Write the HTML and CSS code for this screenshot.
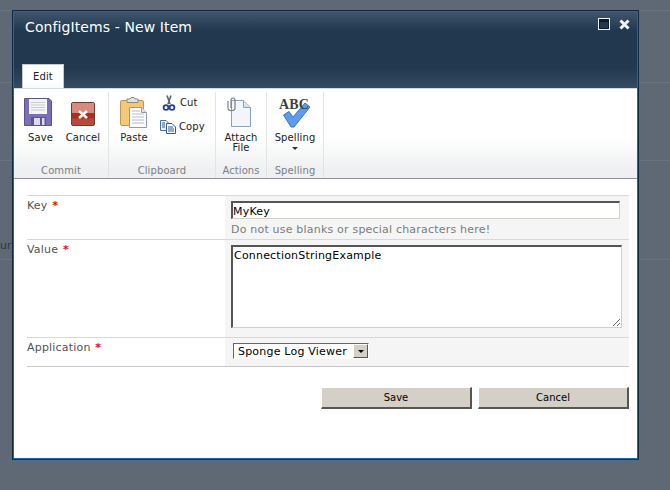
FILE: index.html
```html
<!DOCTYPE html>
<html lang="en">
<head>
<meta charset="utf-8">
<title>ConfigItems - New Item</title>
<link rel="stylesheet" href="styles.css">
</head>
<body>
<div class="backdrop">
  <i class="bg-line l1"></i><i class="bg-line l2"></i><i class="bg-line l3"></i><i class="bg-line l4"></i>
  <span class="bg-text">ur</span>
  <div class="dialog">
    <header class="titlebar">
      <div class="title-row">
        <h1 class="title">ConfigItems - New Item</h1>
        <div class="win-btns">
          <svg width="12" height="12" viewBox="0 0 12 12"><rect x="0.5" y="0.5" width="11" height="11" fill="#22384f" stroke="#eef0f2"/><rect x="1" y="1" width="10" height="2.5" fill="#0d1a28"/><rect x="1.5" y="3.5" width="9" height="7" fill="#22384f" stroke="#0d1a28"/></svg>
          <svg width="11" height="11" viewBox="0 0 11 11"><path d="M1.5 1.5 L9.5 9.5 M9.5 1.5 L1.5 9.5" stroke="#f4f5f6" stroke-width="3" fill="none"/></svg>
        </div>
      </div>
      <div class="tab">Edit</div>
    </header>
    <section class="ribbon">
      <div class="group g-commit">
        <div class="tools">
          <div class="tool t-save">
            <svg width="28" height="28" viewBox="0 0 28 28"><path d="M0.5 0.5H25L27.5 3V27.5H0.5Z" fill="#7c6fb8" stroke="#5a5196"/><rect x="5" y="1" width="18" height="15" fill="#f6f6f8"/><path d="M7 4.5H21M7 7H21M7 9.5H21M7 12H21" stroke="#c8c8d4"/><rect x="7" y="19" width="15" height="8" fill="#5e5596"/><rect x="10" y="20" width="6" height="7" fill="#dcdce8"/><rect x="18" y="20" width="2.5" height="7" fill="#dcdce8"/></svg>
            <span>Save</span>
          </div>
          <div class="tool t-cancel">
            <svg width="24" height="24" viewBox="0 0 24 24"><rect x="0.5" y="0.5" width="23" height="23" rx="1.5" fill="#b8493a" stroke="#6e3b35"/><rect x="1" y="1" width="22" height="10" fill="#d98a7c"/><rect x="1" y="11" width="22" height="5.5" fill="#a8301f"/><path d="M8 9 L16 16 M16 9 L8 16" stroke="#fff" stroke-width="2.6"/></svg>
            <span>Cancel</span>
          </div>
        </div>
        <div class="group-label">Commit</div>
      </div>
      <div class="group g-clip">
        <div class="tools">
          <div class="tool t-paste">
            <svg width="28" height="31" viewBox="0 0 28 31"><rect x="0.5" y="3.5" width="23" height="25" rx="1.5" fill="#f4c875" stroke="#b9985c"/><path d="M7 4V2H10L11 0.5H14L15 2H18V5.5H7Z" fill="#e4e2dc" stroke="#8d8a80"/><path d="M9.5 10.5H21.5L26.5 15.5V30.5H9.5Z" fill="#fff" stroke="#8c9cb0"/><path d="M21.5 10.5V15.5H26.5" fill="#dde4ee" stroke="#8c9cb0"/><path d="M12 14H20M12 17H24M12 20H24M12 23H24M12 26H24" stroke="#b4bcc8"/></svg>
            <span>Paste</span>
          </div>
          <div class="stack">
            <div class="small-tool st-cut">
              <svg width="14" height="16" viewBox="1 0 14 16"><path d="M6 0.5 L9 9 M10 0.5 L7 9" stroke="#60646c" stroke-width="1.6"/><circle cx="5" cy="12.5" r="2.4" fill="none" stroke="#23439a" stroke-width="1.8"/><circle cx="11" cy="12.5" r="2.4" fill="none" stroke="#23439a" stroke-width="1.8"/></svg>
              <span>Cut</span>
            </div>
            <div class="small-tool st-copy">
              <svg width="16" height="14" viewBox="0 0 16 14"><path d="M0.5 0.5H6L8 2.5V10.5H0.5Z" fill="#eef3fa" stroke="#4a70ac"/><path d="M6.5 3.5H12L15.5 7V13.5H6.5Z" fill="#fff" stroke="#2d5a9e"/><path d="M2 3H5M2 5H5M2 7H5M8 7H13M8 9H14M8 11H14" stroke="#2d5a9e"/></svg>
              <span>Copy</span>
            </div>
          </div>
        </div>
        <div class="group-label">Clipboard</div>
      </div>
      <div class="group g-actions">
        <div class="tools">
          <div class="tool t-attach">
            <svg width="26" height="30" viewBox="0 0 26 30"><path d="M5.5 3.5H17.5L24.5 10.5V29.5H5.5Z" fill="#f2f6fb" stroke="#8ca0b8"/><path d="M17.5 3.5V10.5H24.5" fill="#d9e2ee" stroke="#8ca0b8"/><path d="M5 11V3.5C5 2 6 1 7 1S9 2 9 3.5V11C9 14.5 2 14.5 2 11V4" fill="none" stroke="#7a8088" stroke-width="1.2"/></svg>
            <span>Attach<br>File</span>
          </div>
        </div>
        <div class="group-label">Actions</div>
      </div>
      <div class="group g-spell">
        <div class="tools">
          <div class="tool t-spell">
            <svg width="32" height="30" viewBox="0 0 32 30"><path d="M4.5 17 L10 13.5 L14 19 L26 5 L31 9 L15 29 L12 29 Z" fill="#5c9cec" stroke="#3a74c8"/><text x="0" y="11" class="abc">ABC</text></svg>
            <span>Spelling</span>
            <i class="caret"></i>
          </div>
        </div>
        <div class="group-label">Spelling</div>
      </div>
      <div class="ribbon-fill"></div>
    </section>
    <main class="content">
      <div class="form">
        <div class="row row-key">
          <div class="label">Key <b>*</b></div>
          <div class="field">
            <input class="txt" type="text" value="MyKey">
            <div class="hint">Do not use blanks or special characters here!</div>
          </div>
        </div>
        <div class="row row-value">
          <div class="label">Value <b>*</b></div>
          <div class="field"><textarea class="area">ConnectionStringExample</textarea></div>
        </div>
        <div class="row row-app">
          <div class="label">Application <b>*</b></div>
          <div class="field">
            <div class="select">
              <span class="select-val">Sponge Log Viewer</span>
              <span class="select-btn"><i></i></span>
            </div>
          </div>
        </div>
      </div>
      <div class="actions">
        <button class="btn" type="button">Save</button>
        <button class="btn" type="button">Cancel</button>
      </div>
    </main>
  </div>
</div>
</body>
</html>
```
FILE: styles.css
```css
* { box-sizing: border-box; }
html, body { margin: 0; padding: 0; }
body { font-family: "DejaVu Sans", Verdana, sans-serif; font-size: 10px; overflow: hidden; }
.backdrop { position: relative; width: 670px; height: 490px; background: #5f6975; padding: 10px 0 0 12px; overflow: hidden; }
.bg-line { position: absolute; left: 0; width: 670px; height: 1px; background: #6a737f; }
.l1 { top: 10px; } .l2 { top: 82px; } .l3 { top: 160px; } .l4 { top: 259px; }
.bg-text { position: absolute; left: 0; top: 239px; color: #2f3640; font-size: 11px; }
.dialog { position: relative; width: 627px; height: 450px; background: #fff; border: 1px solid #0e2a47; box-shadow: inset 0 0 0 1px #0072c6; display: flex; flex-direction: column; padding: 1px; }
.titlebar { height: 76px; display: flex; flex-direction: column; justify-content: space-between; background: linear-gradient(#3e556c 0, #22384f 19px, #21384f 55px, #344b62 100%); padding-left: 8px; }
.title-row { display: flex; justify-content: space-between; padding: 7px 7px 0 3px; }
.title { margin: 0; font-size: 14px; letter-spacing: 0.1px; font-weight: 400; color: #fff; line-height: 16px; }
.win-btns { display: flex; gap: 9px; align-items: center; height: 12px; margin-top: -1px; }
.win-btns svg { display: block; }
.tab { width: 42px; height: 24px; background: linear-gradient(#fff, #fff 70%, #f8f9fa); border: 1px solid #c4cad0; border-bottom: 0; color: #222; text-align: center; line-height: 24px; font-size: 10px; letter-spacing: 0.1px; }
.ribbon { height: 91px; display: flex; background: linear-gradient(#fff 0, #fff 55%, #eff0f1 90%); border-bottom: 1px solid #8f9299; border-top: 1px solid #d5dade; }
.group { display: flex; flex-direction: column; border-right: 1px solid #e2e4e6; height: 86px; margin-top: 3px; }
.g-commit { width: 95px; } .g-clip { width: 107px; } .g-actions { width: 51px; } .g-spell { width: 57px; }
.tools { flex: 1; display: flex; color: #222; font-size: 10px; letter-spacing: 0.1px; line-height: 10px; }
.group-label { height: 18px; text-align: center; color: #7b7f85; font-size: 10px; letter-spacing: 0.1px; line-height: 22px; }
.tool { display: flex; flex-direction: column; align-items: center; text-align: center; }
.tool svg { display: block; flex: none; }
.tool span { display: block; }
.t-save { width: 49px; padding: 6px 0 0 10px; align-items: flex-start; }
.t-save span { margin: 7px 0 0 4px; }
.t-cancel { width: 40px; padding-top: 10px; }
.t-cancel span { margin-top: 7px; }
.t-paste { width: 50px; padding-top: 5px; }
.t-paste span { margin-top: 5px; }
.stack { display: flex; flex-direction: column; padding: 3px 0 0 1px; gap: 8px; }
.small-tool { display: flex; align-items: center; height: 16px; }
.st-cut { padding-left: 2px; gap: 4px; }
.st-copy { gap: 3px; }
.t-attach { width: 50px; padding-top: 5px; }
.t-attach svg { margin-right: 4px; }
.t-attach span { margin-top: 6px; }
.t-spell { width: 56px; padding-top: 6px; }
.t-spell span { margin-top: 5px; }
.abc { font-family: "Liberation Serif", serif; font-weight: 700; font-size: 14px; fill: #3a3f46; }
.caret { width: 0; height: 0; margin-top: 4px; border: 3px solid transparent; border-top-color: #333; border-bottom: 0; }
.ribbon-fill { flex: 1; }
.content { flex: 1; padding: 16px 8px 0 13px; color: #525252; font-size: 11px; letter-spacing: 0.2px; }
.form { border-bottom: 1px solid #c6c6c6; }
.row { display: grid; grid-template-columns: 198px 1fr; border-top: 1px solid #d8d8d8; }
.row-key { height: 44px; } .row-value { height: 98px; } .row-app { height: 29px; }
.label { padding: 4px 0 0 0; line-height: 12px; color: #525252; }
.label b { color: #f00; font-weight: 700; padding-left: 1px; }
.field { background: #f5f5f5; padding: 5px 0 0 6px; }
.txt, .area { display: block; font: 11px "DejaVu Sans", Verdana, sans-serif; letter-spacing: 0.2px; color: #000; background: #fff; border-style: solid; border-color: #555 #d4d0c8 #d4d0c8 #555; outline: 0; }
.txt { width: 389px; height: 18px; border-width: 2px 1px 1px 2px; padding: 1px 0 0 0; }
.hint { margin-top: 4px; color: #7b7b7b; line-height: 14px; }
.area { width: 391px; height: 83px; border-width: 2px 1px 1px 2px; padding: 2px 1px; margin: 0; line-height: 13px; resize: both; }
.select { display: flex; width: 136px; height: 16px; margin: 0 0 0 2px; background: #fff; border-style: solid; border-width: 1px; border-color: #666 #fff #fff #666; color: #000; }
.select-val { flex: 1; padding-left: 4px; line-height: 16px; }
.select-btn { width: 15px; background: #d4d0c8; border: 1px solid; border-color: #fff #555 #555 #fff; display: flex; align-items: center; justify-content: center; }
.select-btn i { width: 0; height: 0; border: 3px solid transparent; border-top-color: #000; border-bottom: 0; }
.actions { display: flex; justify-content: flex-end; gap: 6px; margin-top: 20px; }
.btn { width: 151px; height: 22px; padding: 0; background: #d4d0c8; border-style: solid; border-width: 1px 2px 2px 1px; border-color: #fff #555 #555 #fff; color: #000; font: 10px "DejaVu Sans", Verdana, sans-serif; }
```
